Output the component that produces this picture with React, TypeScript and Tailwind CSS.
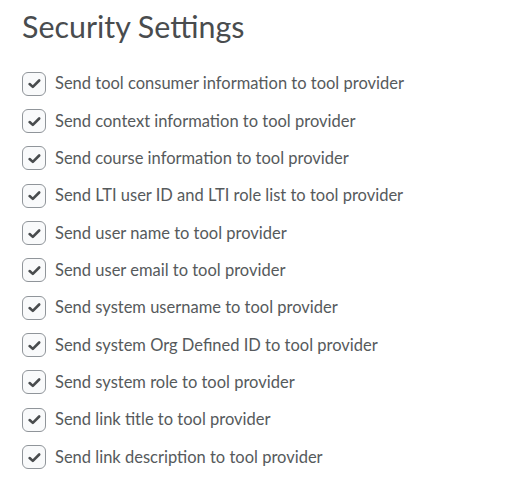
import React from "react";

const items = [
  "Send tool consumer information to tool provider",
  "Send context information to tool provider",
  "Send course information to tool provider",
  "Send LTI user ID and LTI role list to tool provider",
  "Send user name to tool provider",
  "Send user email to tool provider",
  "Send system username to tool provider",
  "Send system Org Defined ID to tool provider",
  "Send system role to tool provider",
  "Send link title to tool provider",
  "Send link description to tool provider",
];

function CheckRow({ label }: { label: string }) {
  return (
    <label className="flex items-center gap-[9px] h-[37.35px]">
      <span className="flex h-[24px] w-[24px] shrink-0 items-center justify-center rounded-[6px] border border-[#90959a] bg-[#f9fafb]">
        <svg viewBox="0 0 16 16" className="h-[15px] w-[15px]">
          <path
            d="M2.8 8.6 6.2 11.6 13 4.8"
            fill="none"
            stroke="#494c4e"
            strokeWidth="2.8"
            strokeLinecap="round"
            strokeLinejoin="round"
          />
        </svg>
      </span>
      <span className="text-[16.5px] text-[#565a5c]">{label}</span>
    </label>
  );
}

export default function App() {
  return (
    <div className="min-h-screen bg-white px-[22px] pt-[6px] font-['Lato',sans-serif]">
      <h1 className="text-[30.4px] leading-[40px] text-[#494c4e]">Security Settings</h1>
      <div className="mt-[19px] flex flex-col">
        {items.map((it) => (
          <CheckRow key={it} label={it} />
        ))}
      </div>
    </div>
  );
}
